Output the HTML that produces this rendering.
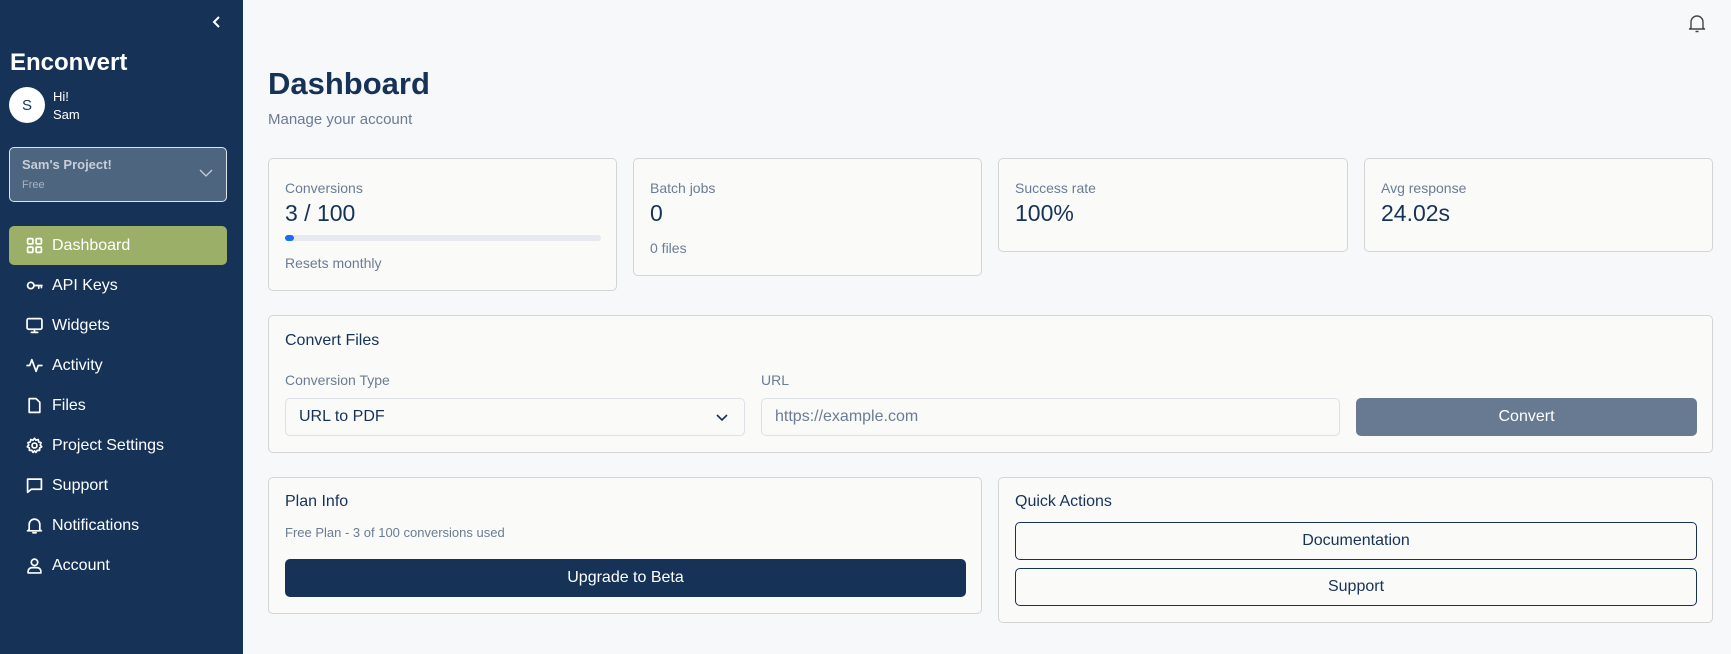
<!DOCTYPE html>
<html><head><meta charset="utf-8"><style>
*{box-sizing:border-box;margin:0;padding:0}
body{width:1731px;height:654px;overflow:hidden;background:#f7f8fa;font-family:"Liberation Sans",sans-serif;position:relative;color:#163357}
.sb{position:absolute;left:0;top:0;width:243px;height:654px;background:#163357;color:#fff}
.abs{position:absolute}
.nav{position:absolute;left:9px;width:218px;height:39px;display:flex;align-items:center;padding-left:17px;font-size:16px;color:#fff}
.nav svg{width:17px;height:17px;margin-right:9px;fill:none;stroke:#fff;stroke-width:1.6;stroke-linecap:round;stroke-linejoin:round}
.card{position:absolute;background:#fafaf9;border:1px solid #d4d4d4;border-radius:5px}
.lbl{position:absolute;font-size:14px;color:#6b7c93}
.val{position:absolute;font-size:23px;color:#163357}
.in{position:absolute;border:1px solid #dde0e4;border-radius:5px;background:#fafaf9;font-size:16px;display:flex;align-items:center;padding-left:13px}
.btn{position:absolute;border-radius:5px;display:flex;align-items:center;justify-content:center;font-size:16px}
</style></head><body>
<div class="sb">
 <svg class="abs" style="left:210px;top:15px" width="14" height="14" viewBox="0 0 14 14"><path d="M9 2 L4 7 L9 12" fill="none" stroke="#fff" stroke-width="2"/></svg>
 <div class="abs" style="left:10px;top:49px;font-size:24px;font-weight:bold">Enconvert</div>
 <div class="abs" style="left:9px;top:87px;width:36px;height:36px;border-radius:50%;background:#fff;color:#163357;font-size:15px;display:flex;align-items:center;justify-content:center">S</div>
 <div class="abs" style="left:53px;top:88px;font-size:13px;line-height:18px">Hi!<br>Sam</div>
 <div class="abs" style="left:9px;top:147px;width:218px;height:55px;border:1px solid #dfe4ea;border-radius:5px;background:#4e6580">
  <div class="abs" style="left:12px;top:9px;font-size:13px;font-weight:bold;color:#c7ced8">Sam's Project!</div>
  <div class="abs" style="left:12px;top:31px;font-size:11px;color:#a9b3c1">Free</div>
  <svg class="abs" style="left:189px;top:20px" width="14" height="10" viewBox="0 0 14 10"><path d="M1 2 L7 8 L13 2" fill="none" stroke="#c7ced8" stroke-width="1.3"/></svg>
 </div>
 <div class="nav" style="top:226px;background:#9caf68;border-radius:5px"><svg viewBox="0 0 16 16"><rect x="1.5" y="1.5" width="5" height="5" rx="1"/><rect x="9.5" y="1.5" width="5" height="5" rx="1"/><rect x="1.5" y="9.5" width="5" height="5" rx="1"/><rect x="9.5" y="9.5" width="5" height="5" rx="1"/></svg>Dashboard</div>
 <div class="nav" style="top:266px"><svg viewBox="0 0 16 16"><circle cx="4.5" cy="8" r="3"/><path d="M7.5 8H15M12 8V10.5M14.5 8V10"/></svg>API Keys</div>
 <div class="nav" style="top:306px"><svg viewBox="0 0 16 16"><rect x="1" y="1.5" width="14" height="10" rx="1.5"/><path d="M8 11.5V14.5M5 14.5H11"/></svg>Widgets</div>
 <div class="nav" style="top:346px"><svg viewBox="0 0 16 16"><path d="M1 8H3.5L5.5 2.5L9.5 13.5L11.5 8H15"/></svg>Activity</div>
 <div class="nav" style="top:386px"><svg viewBox="0 0 16 16"><path d="M3 1.5H9.5L13 5V14.5H3Z"/></svg>Files</div>
 <div class="nav" style="top:426px"><svg viewBox="0 0 16 16"><circle cx="8" cy="8" r="2.3"/><path d="M8 1.2L9.3 3L11.5 2.4L12 4.6L14.2 5.3L13.4 7.5L14.8 9.2L12.8 10.3L12.8 12.6L10.6 12.6L9.3 14.5L8 13 L6.7 14.5L5.4 12.6L3.2 12.6L3.2 10.3L1.2 9.2L2.6 7.5L1.8 5.3L4 4.6L4.5 2.4L6.7 3Z"/></svg>Project Settings</div>
 <div class="nav" style="top:466px"><svg viewBox="0 0 16 16"><path d="M1.5 2H14.5V11.5H5L1.5 14.5Z"/></svg>Support</div>
 <div class="nav" style="top:506px"><svg viewBox="0 0 16 16"><path d="M3 12V7A5 5 0 0 1 13 7V12L14.5 13H1.5Z M6.5 14.8H9.5"/></svg>Notifications</div>
 <div class="nav" style="top:546px"><svg viewBox="0 0 16 16"><circle cx="8" cy="5" r="3"/><path d="M2 15V13.5A3.5 3.5 0 0 1 5.5 10H10.5A3.5 3.5 0 0 1 14 13.5V15Z"/></svg>Account</div>
</div>
<svg class="abs" style="left:1687px;top:13px" width="20" height="20" viewBox="0 0 20 20"><path d="M4 15V9A6 6 0 0 1 16 9V15L17.5 16H2.5Z M8.5 18.5H11.5" fill="none" stroke="#444" stroke-width="1.4" stroke-linejoin="round"/></svg>
<div class="abs" style="left:268px;top:66px;font-size:31px;font-weight:bold;color:#163357">Dashboard</div>
<div class="abs" style="left:268px;top:111px;font-size:15px;color:#6b7c93">Manage your account</div>

<div class="card" style="left:268px;top:158px;width:349px;height:133px">
 <div class="lbl" style="left:16px;top:21px">Conversions</div>
 <div class="val" style="left:16px;top:41px">3 / 100</div>
 <div class="abs" style="left:16px;top:76px;width:316px;height:6px;border-radius:3px;background:#e6e9ee"><div style="width:9px;height:6px;border-radius:3px;background:#1a6cf0"></div></div>
 <div class="lbl" style="left:16px;top:96px">Resets monthly</div>
</div>
<div class="card" style="left:633px;top:158px;width:349px;height:118px">
 <div class="lbl" style="left:16px;top:21px">Batch jobs</div>
 <div class="val" style="left:16px;top:41px">0</div>
 <div class="lbl" style="left:16px;top:81px">0 files</div>
</div>
<div class="card" style="left:998px;top:158px;width:350px;height:94px">
 <div class="lbl" style="left:16px;top:21px">Success rate</div>
 <div class="val" style="left:16px;top:41px">100%</div>
</div>
<div class="card" style="left:1364px;top:158px;width:349px;height:94px">
 <div class="lbl" style="left:16px;top:21px">Avg response</div>
 <div class="val" style="left:16px;top:41px">24.02s</div>
</div>

<div class="card" style="left:268px;top:315px;width:1445px;height:138px">
 <div class="abs" style="left:16px;top:16px;font-size:16px">Convert Files</div>
 <div class="lbl" style="left:16px;top:56px">Conversion Type</div>
 <div class="in" style="left:16px;top:82px;width:460px;height:38px">URL to PDF
  <svg class="abs" style="left:430px;top:13px" width="12" height="10" viewBox="0 0 12 10"><path d="M1 3L6 8L11 3" fill="none" stroke="#163357" stroke-width="1.6"/></svg></div>
 <div class="lbl" style="left:492px;top:56px">URL</div>
 <div class="in" style="left:492px;top:82px;width:579px;height:38px;color:#6b7c93">https://example.com</div>
 <div class="btn" style="left:1087px;top:82px;width:341px;height:38px;background:#677a91;color:#fff">Convert</div>
</div>

<div class="card" style="left:268px;top:477px;width:714px;height:137px">
 <div class="abs" style="left:16px;top:15px;font-size:16px">Plan Info</div>
 <div class="lbl" style="left:16px;top:47px;font-size:13px">Free Plan - 3 of 100 conversions used</div>
 <div class="btn" style="left:16px;top:81px;width:681px;height:38px;background:#163357;color:#fff">Upgrade to Beta</div>
</div>
<div class="card" style="left:998px;top:477px;width:715px;height:146px">
 <div class="abs" style="left:16px;top:15px;font-size:16px">Quick Actions</div>
 <div class="btn" style="left:16px;top:44px;width:682px;height:38px;border:1px solid #163357;background:#fafaf9;color:#163357">Documentation</div>
 <div class="btn" style="left:16px;top:90px;width:682px;height:38px;border:1px solid #163357;background:#fafaf9;color:#163357">Support</div>
</div>
</body></html>
